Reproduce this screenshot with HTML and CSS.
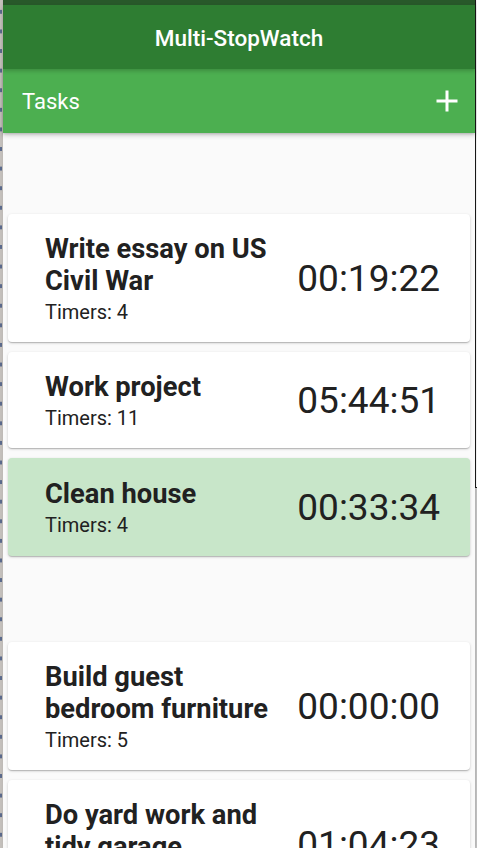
FILE: index.html
```html
<!DOCTYPE html>
<html lang="en">
<head>
<meta charset="utf-8">
<title>Multi-StopWatch</title>
<link rel="stylesheet" href="styles.css">
</head>
<body>
<div class="frame">
  <div class="left-strip"></div>
  <div class="app">
    <div class="topline"></div>
    <header class="titlebar">Multi-StopWatch</header>
    <div class="toolbar">
      <span class="toolbar-title">Tasks</span>
      <svg class="add" width="24" height="24" viewBox="0 0 24 24" aria-label="Add task">
        <path d="M12 1.5v21M1.5 12h21" stroke="#fff" stroke-width="3" fill="none"/>
      </svg>
    </div>
    <main class="list">
      <div class="card first">
        <div class="info">
          <div class="name">Write essay on US Civil War</div>
          <div class="timers">Timers: 4</div>
        </div>
        <div class="time">00:19:22</div>
      </div>
      <div class="card">
        <div class="info">
          <div class="name">Work project</div>
          <div class="timers">Timers: 11</div>
        </div>
        <div class="time">05:44:51</div>
      </div>
      <div class="card active">
        <div class="info">
          <div class="name">Clean house</div>
          <div class="timers">Timers: 4</div>
        </div>
        <div class="time">00:33:34</div>
      </div>
      <div class="card spaced">
        <div class="info">
          <div class="name">Build guest bedroom furniture</div>
          <div class="timers">Timers: 5</div>
        </div>
        <div class="time">00:00:00</div>
      </div>
      <div class="card">
        <div class="info">
          <div class="name">Do yard work and tidy garage</div>
          <div class="timers">Timers: 3</div>
        </div>
        <div class="time">01:04:23</div>
      </div>
    </main>
  </div>
  <div class="right-strip">
    <div class="rs-top"></div>
    <div class="rs-bottom"></div>
  </div>
</div>
</body>
</html>
```

FILE: styles.css
```css
* { box-sizing: border-box; }

html, body {
  margin: 0;
  padding: 0;
  height: 848px;
  overflow: hidden;
  background: #fafafa;
  font-family: Roboto, "Liberation Sans", sans-serif;
}

.frame {
  display: flex;
  width: 477px;
  height: 848px;
  overflow: hidden;
}

.left-strip {
  width: 3px;
  flex: none;
  background-color: #c4c0bc;
  background-image:
    repeating-linear-gradient(to bottom,
      transparent 0, transparent 6px,
      #5b6a8c 6px, #5b6a8c 10px,
      transparent 10px, transparent 19.6px),
    linear-gradient(to right, transparent 0, transparent 1px, #c4c0bc 1px);
  background-size: 2px 19.6px, 3px 100%;
  background-repeat: repeat-y, no-repeat;
  background-position: 0 4px, 0 0;
}

.app {
  width: 472px;
  flex: none;
  display: flex;
  flex-direction: column;
  background: #fafafa;
  box-shadow: 1px 0 3px rgba(0,0,0,0.15);
  position: relative;
}

.topline {
  height: 5px;
  background: #28582a;
  flex: none;
}

.titlebar {
  height: 64px;
  flex: none;
  background: #2e7d32;
  color: #fff;
  font-size: 22.5px;
  font-weight: 500;
  display: flex;
  align-items: center;
  justify-content: center;
  padding-top: 2px;
  position: relative;
  z-index: 2;
  box-shadow: 0 2px 4px rgba(0,0,0,0.2);
}

.toolbar {
  height: 64px;
  flex: none;
  background: #4caf50;
  display: flex;
  align-items: center;
  justify-content: space-between;
  padding: 0 16px 0 19px;
  position: relative;
  z-index: 1;
  box-shadow: 0 2px 5px rgba(0,0,0,0.22), 0 1px 2px rgba(0,0,0,0.12);
}

.toolbar-title {
  color: #fff;
  font-size: 22px;
  font-weight: 400;
}

.add { display: block; }

.list {
  padding: 0 5px;
  display: flex;
  flex-direction: column;
  gap: 10px;
}

.card {
  background: #fff;
  border-radius: 4px;
  box-shadow: 0 1px 3px rgba(0,0,0,0.18), 0 1px 1px rgba(0,0,0,0.1), 0 2px 1px -1px rgba(0,0,0,0.08);
  display: flex;
  align-items: center;
  justify-content: space-between;
  padding: 19px 30px 18px 37px;
  color: #212121;
}

.card.first { margin-top: 81px; }
.card.spaced { margin-top: 76px; }
.card.active { background: #c8e6c9; padding-top: 20px; padding-bottom: 19px; }

.info {
  width: 240px;
  flex: none;
}

.name {
  font-size: 27.3px;
  font-weight: 700;
  line-height: 32px;
}

.timers {
  font-size: 20px;
  line-height: 24px;
  margin-top: 3px;
}

.time {
  font-size: 37px;
  font-weight: 400;
  line-height: 42px;
  white-space: nowrap;
}

.right-strip {
  width: 2px;
  flex: none;
  display: flex;
  flex-direction: column;
}

.rs-top {
  height: 488px;
  flex: none;
  border-left: 1px solid #1a1a1a;
  border-bottom: 1px solid #1a1a1a;
  background: #fff;
}

.rs-bottom {
  flex: 1;
  background: #c8c8c8;
}
```
